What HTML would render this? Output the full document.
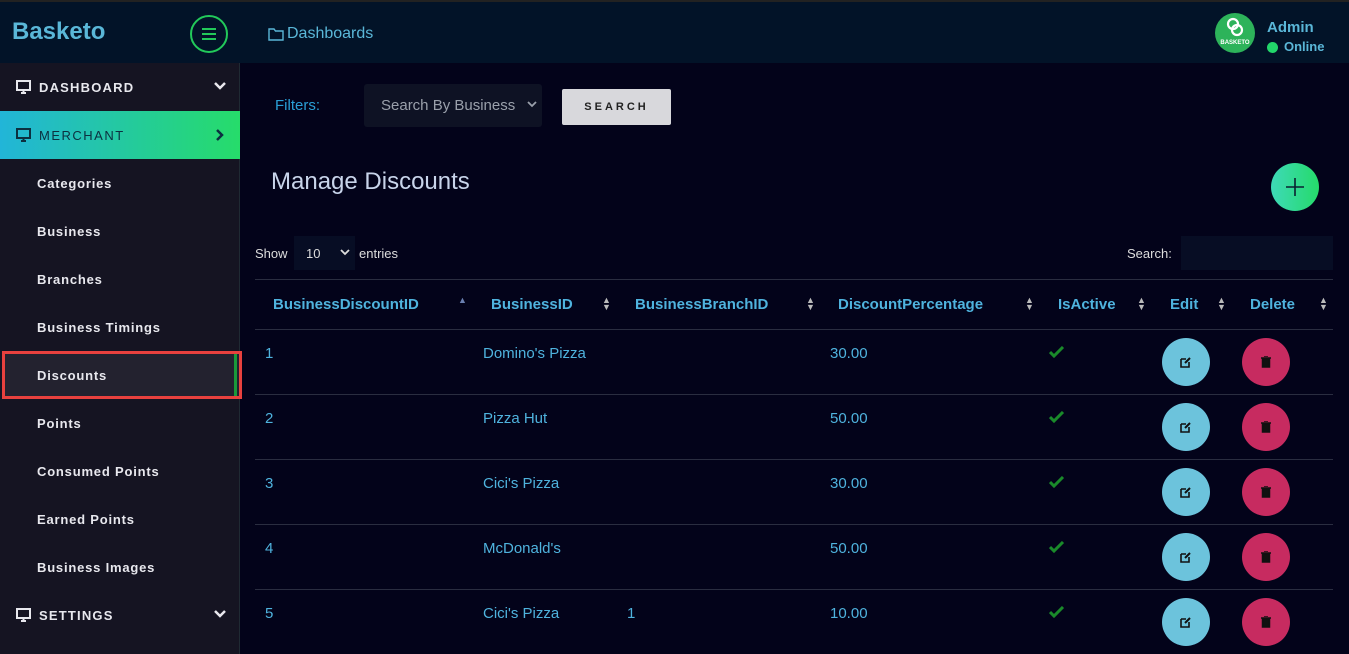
<!DOCTYPE html>
<html><head><style>
*{box-sizing:border-box;margin:0;padding:0}
body{width:1349px;height:654px;overflow:hidden;background:#03031a;font-family:"Liberation Sans",sans-serif;position:relative}
.hdr{position:absolute;left:0;top:0;width:1349px;height:63px;background:#021328;border-top:2px solid #222}
.side{position:absolute;left:0;top:63px;width:240px;height:591px;background:#151422;border-right:1px solid #1f2a33}
.it{position:absolute;left:0;width:240px;height:48px;color:#e8e8ee;font-weight:bold;font-size:13px;letter-spacing:.8px;display:flex;align-items:center;padding-left:37px}
.top{padding-left:16px;letter-spacing:1.2px}
.top svg.mon{margin-right:8px}
.chev{position:absolute;right:13px;top:18px}
.abs{position:absolute}
.th{position:absolute;top:296px;color:#4fb3de;font-weight:bold;font-size:15px}
.sort{position:absolute;top:297px;color:#bbb;font-size:9px;line-height:7px}
.td{position:absolute;color:#4fb3de;font-size:15px}
.line{position:absolute;left:255px;width:1078px;height:1px;background:#2a2d40}
.btn{position:absolute;width:48px;height:48px;border-radius:50%}
</style></head><body>
<div class="hdr">
<div class="abs" style="left:12px;top:16px;font-size:24px;color:#5ab7d8;font-weight:bold">Basketo</div>
<div class="abs" style="left:190px;top:13px;width:38px;height:38px;border:2px solid #22c95a;border-radius:50%">
<div class="abs" style="left:10px;top:11px;width:14px;height:2px;background:#22c95a"></div>
<div class="abs" style="left:10px;top:16px;width:14px;height:2px;background:#22c95a"></div>
<div class="abs" style="left:10px;top:21px;width:14px;height:2px;background:#22c95a"></div></div>
<svg class="abs" style="left:268px;top:25px" width="16" height="14" viewBox="0 0 16 14"><path d="M1 2h5l1.5 2H15v9H1z" fill="none" stroke="#5ab7d8" stroke-width="1.4"/></svg>
<div class="abs" style="left:287px;top:23px;color:#5ab7d8;font-size:16px">Dashboards</div>
<div class="abs" style="left:1215px;top:11px;width:40px;height:40px;border-radius:50%;background:#2db35a;color:#fff;font-size:6px;font-weight:bold;text-align:center;padding-top:27px">BASKETO</div>
<svg class="abs" style="left:1225px;top:14px" width="20" height="22"><circle cx="8" cy="8" r="5" fill="none" stroke="#fff" stroke-width="2.2"/><circle cx="12" cy="14" r="5" fill="none" stroke="#fff" stroke-width="2.2"/></svg>
<div class="abs" style="left:1267px;top:17px;color:#5ab7d8;font-size:15px;font-weight:bold">Admin</div>
<div class="abs" style="left:1267px;top:40px;width:11px;height:11px;border-radius:50%;background:#22d66a"></div>
<div class="abs" style="left:1284px;top:37px;color:#5ab7d8;font-size:13px;font-weight:bold">Online</div>
</div>
<div class="side">
<div class="it top" style="top:0"><svg class="mon" width="15" height="14"><rect x="1" y="1" width="13" height="9" fill="none" stroke="#e8e8ee" stroke-width="2"/><path d="M5 13h5M7.5 10v3" stroke="#e8e8ee" stroke-width="2"/></svg>DASHBOARD<svg class="chev" width="14" height="10"><path d="M2 2l5 5 5-5" fill="none" stroke="#e8e8ee" stroke-width="2.5"/></svg></div>
<div class="it top" style="top:48px;background:linear-gradient(90deg,#22b5d8,#26dc6a);color:#0c3040;font-weight:normal;letter-spacing:1.5px"><svg class="mon" width="15" height="14"><rect x="1" y="1" width="13" height="9" fill="none" stroke="#0c3040" stroke-width="2"/><path d="M5 13h5M7.5 10v3" stroke="#0c3040" stroke-width="2"/></svg>MERCHANT<svg class="chev" style="right:15px;top:17px" width="10" height="14"><path d="M2 2l5 5-5 5" fill="none" stroke="#0c3040" stroke-width="2.5"/></svg></div>
<div class="it" style="top:96px">Categories</div>
<div class="it" style="top:144px">Business</div>
<div class="it" style="top:192px">Branches</div>
<div class="it" style="top:240px">Business Timings</div>
<div class="it" style="top:288px;background:#23222f;border:3px solid #e8413e;left:2px;width:240px;padding-left:32px">Discounts<div class="abs" style="right:2px;top:0;width:3px;height:42px;background:#1a9a3a"></div></div>
<div class="it" style="top:336px">Points</div>
<div class="it" style="top:384px">Consumed Points</div>
<div class="it" style="top:432px">Earned Points</div>
<div class="it" style="top:480px">Business Images</div>
<div class="it top" style="top:528px"><svg class="mon" width="15" height="14"><rect x="1" y="1" width="13" height="9" fill="none" stroke="#e8e8ee" stroke-width="2"/><path d="M5 13h5M7.5 10v3" stroke="#e8e8ee" stroke-width="2"/></svg>SETTINGS<svg class="chev" width="14" height="10"><path d="M2 2l5 5 5-5" fill="none" stroke="#e8e8ee" stroke-width="2.5"/></svg></div>
</div>
<div class="abs" style="left:275px;top:97px;color:#2a9fd6;font-size:15px">Filters:</div>
<div class="abs" style="left:364px;top:84px;width:178px;height:43px;background:#0e1224;border-radius:3px;color:#9aa0ab;font-size:15px;padding:13px 0 0 17px">Search By Business<svg class="abs" style="right:5px;top:17px" width="10" height="8"><path d="M1 1l4 4 4-4" fill="none" stroke="#9aa0ab" stroke-width="1.8"/></svg></div>
<div class="abs" style="left:562px;top:89px;width:109px;height:36px;background:#d8d8dc;border-radius:2px;color:#222;font-size:11px;letter-spacing:3px;font-weight:bold;text-align:center;padding-top:12px">SEARCH</div>
<div class="abs" style="left:271px;top:168px;color:#c8d4ea;font-size:24px">Manage Discounts</div>
<div class="abs" style="left:1271px;top:163px;width:48px;height:48px;border-radius:50%;background:linear-gradient(90deg,#3ed9b8,#25db6a)"><svg class="abs" style="left:14px;top:14px" width="20" height="20"><path d="M10 1v18M1 10h18" stroke="#0a2030" stroke-width="1.6"/></svg></div>
<div class="abs" style="left:255px;top:246px;color:#ddd;font-size:13px">Show</div>
<div class="abs" style="left:294px;top:236px;width:61px;height:34px;background:#070d24;color:#ddd;font-size:13px;padding:10px 0 0 12px">10<svg class="abs" style="right:5px;top:13px" width="10" height="8"><path d="M1 1l4 4 4-4" fill="none" stroke="#ddd" stroke-width="1.8"/></svg></div>
<div class="abs" style="left:359px;top:246px;color:#ddd;font-size:13px">entries</div>
<div class="abs" style="left:1127px;top:246px;color:#ddd;font-size:13px">Search:</div>
<div class="abs" style="left:1181px;top:236px;width:152px;height:34px;background:#070d24"></div>
<div class="line" style="top:279px"></div>
<div class="th" style="left:273px">BusinessDiscountID</div><div class="sort" style="left:458px;color:#6a7fb0">▲</div>
<div class="th" style="left:491px">BusinessID</div><div class="sort" style="left:602px">▲<br>▼</div>
<div class="th" style="left:635px">BusinessBranchID</div><div class="sort" style="left:806px">▲<br>▼</div>
<div class="th" style="left:838px">DiscountPercentage</div><div class="sort" style="left:1025px">▲<br>▼</div>
<div class="th" style="left:1058px">IsActive</div><div class="sort" style="left:1137px">▲<br>▼</div>
<div class="th" style="left:1170px">Edit</div><div class="sort" style="left:1217px">▲<br>▼</div>
<div class="th" style="left:1250px">Delete</div><div class="sort" style="left:1319px">▲<br>▼</div>
<div class="line" style="top:329px"></div>
<div id="rows"></div>
<script>
var d=[["1","Domino's Pizza","","30.00"],["2","Pizza Hut","","50.00"],["3","Cici's Pizza","","30.00"],["4","McDonald's","","50.00"],["5","Cici's Pizza","1","10.00"]];
var h="";d.forEach(function(r,i){var y=329+i*65;
h+='<div class="td" style="left:265px;top:'+(y+16)+'px">'+r[0]+'</div><div class="td" style="left:483px;top:'+(y+16)+'px">'+r[1]+'</div><div class="td" style="left:627px;top:'+(y+16)+'px">'+r[2]+'</div><div class="td" style="left:830px;top:'+(y+16)+'px">'+r[3]+'</div>';
h+='<svg class="abs" style="left:1049px;top:'+(y+17)+'px" width="16" height="12"><path d="M1 6l4 4 9-9" fill="none" stroke="#1a8a2a" stroke-width="3"/></svg>';
h+='<div class="btn" style="left:1162px;top:'+(y+9)+'px;background:#6cc3dc"><svg class="abs" style="left:18px;top:18px" width="12" height="12"><path d="M1 3h5M1 3v8h8V6" fill="none" stroke="#111" stroke-width="1.6"/><path d="M5 7l5-5" stroke="#111" stroke-width="2"/></svg></div>';
h+='<div class="btn" style="left:1242px;top:'+(y+9)+'px;background:#c72b60"><svg class="abs" style="left:19px;top:18px" width="10" height="12"><path d="M0 2h10M3 0h4M1.5 3h7v8h-7z" stroke="#111" fill="#111" stroke-width="1.5"/></svg></div>';
if(i<4)h+='<div class="line" style="top:'+(y+65)+'px"></div>';});
document.getElementById("rows").innerHTML=h;
</script>
</body></html>
